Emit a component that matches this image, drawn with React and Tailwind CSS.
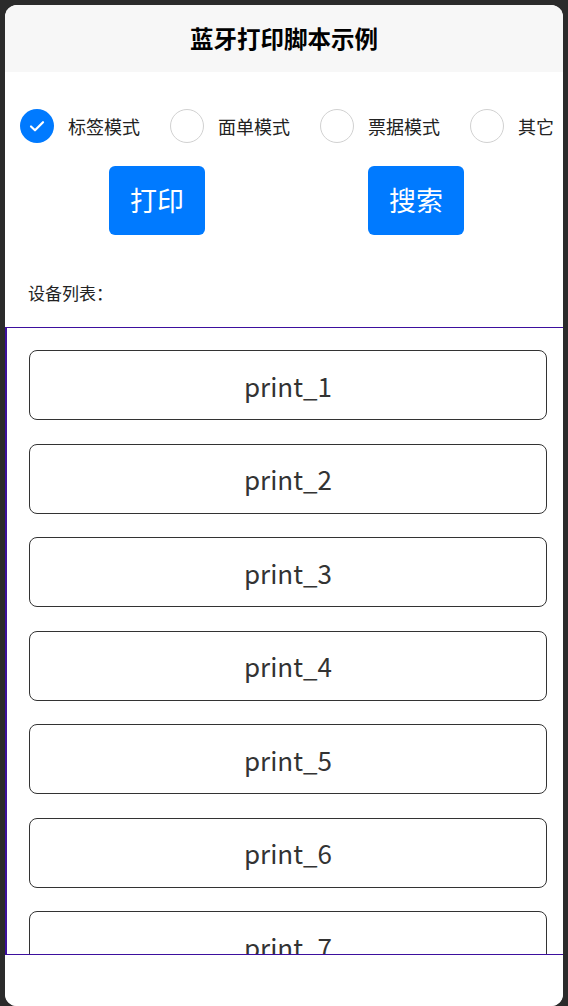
import { useState } from 'react'

const modes = ['标签模式', '面单模式', '票据模式', '其它']
const devices = ['print_1', 'print_2', 'print_3', 'print_4', 'print_5', 'print_6', 'print_7']

function Radio({ checked }) {
  if (checked) {
    return (
      <div className="w-[34px] h-[34px] rounded-full bg-[#007aff] flex items-center justify-center shrink-0">
        <svg width="18" height="18" viewBox="0 0 18 18" fill="none">
          <path d="M3 9.5l4 3.8L15 5.2" stroke="#fff" strokeWidth="2.2" strokeLinecap="round" strokeLinejoin="round" />
        </svg>
      </div>
    )
  }
  return <div className="w-[34px] h-[34px] rounded-full border border-[#d1d1d1] bg-white shrink-0" />
}

export default function App() {
  const [mode, setMode] = useState(0)

  return (
    <div
      className="h-[1006px] bg-[#2b2b2b] px-[5px] pt-[5px] overflow-hidden"
      style={{ fontFamily: '"Noto Sans CJK SC", "Noto Sans", sans-serif' }}
    >
      <div className="h-full bg-white rounded-[12px] overflow-hidden flex flex-col">
        <div className="h-[67px] bg-[#f7f7f7] flex items-center justify-center shrink-0">
          <h1 className="text-[23.5px] font-bold text-black">蓝牙打印脚本示例</h1>
        </div>

        <div className="flex pl-[15px] pt-[37px]">
          {modes.map((m, i) => (
            <div key={m} className="w-[150px] shrink-0 flex items-center gap-[14px]" onClick={() => setMode(i)}>
              <Radio checked={mode === i} />
              <span className="text-[18px] text-[#222] whitespace-nowrap">{m}</span>
            </div>
          ))}
        </div>

        <div className="flex pl-[104px] gap-[163px] mt-[23px]">
          <button className="w-[96px] h-[69px] rounded-[6px] bg-[#007aff] text-white text-[27px]">打印</button>
          <button className="w-[96px] h-[69px] rounded-[6px] bg-[#007aff] text-white text-[27px]">搜索</button>
        </div>

        <div className="px-[23px] mt-[47px] text-[17px] text-[#222] leading-[22px]">设备列表：</div>

        <div className="mt-[23px] h-[628px] border-t border-b border-l-2 border-[#3d0f9e] overflow-hidden shrink-0">
          <div className="flex flex-col gap-[23.5px] pt-[22px] pl-[22px]">
            {devices.map((d) => (
              <div
                key={d}
                className="w-[518px] h-[70px] shrink-0 rounded-[8px] border border-[#333] flex items-center justify-center text-[26px] text-[#333]"
              >
                {d}
              </div>
            ))}
          </div>
        </div>

        <div className="flex-1 bg-white" />
      </div>
    </div>
  )
}
